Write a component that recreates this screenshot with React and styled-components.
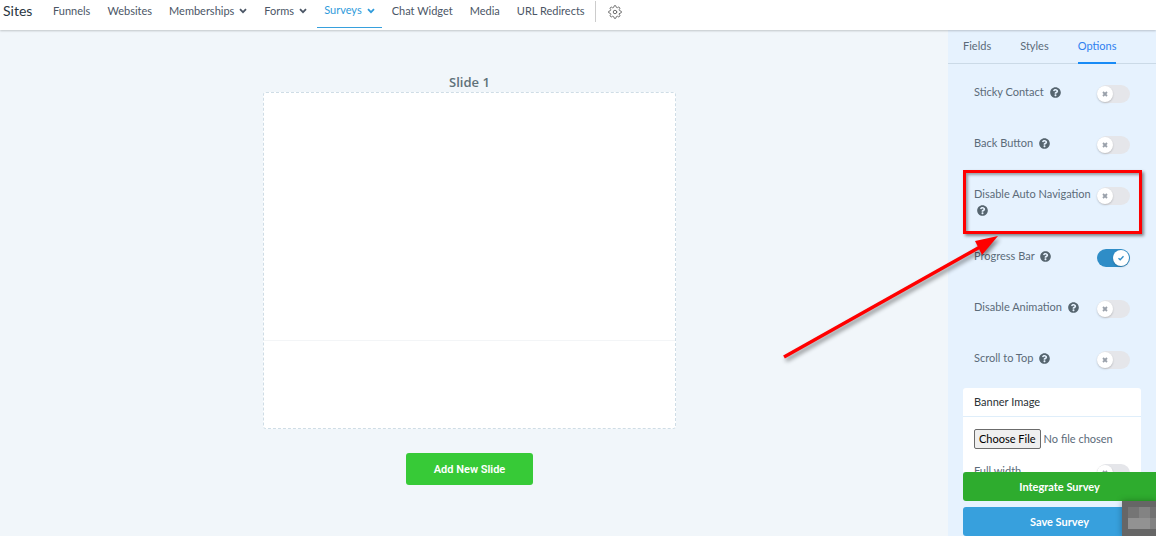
import React, { useState } from "react";
import styled, { createGlobalStyle } from "styled-components";
import { FaQuestionCircle } from "react-icons/fa";
import { FiSettings } from "react-icons/fi";

const navItems = [
  { label: "Funnels" },
  { label: "Websites" },
  { label: "Memberships", menu: true },
  { label: "Forms", menu: true },
  { label: "Surveys", menu: true, active: true },
  { label: "Chat Widget" },
  { label: "Media" },
  { label: "URL Redirects" },
];

const tabs = ["Fields", "Styles", "Options"];

const optionList = [
  { id: "sticky", label: "Sticky Contact" },
  { id: "back", label: "Back Button" },
  { id: "autoNav", label: "Disable Auto Navigation", highlight: true },
  { id: "progress", label: "Progress Bar" },
  { id: "animation", label: "Disable Animation" },
  { id: "scroll", label: "Scroll to Top" },
];

function Chevron() {
  return (
    <ChevronIcon viewBox="0 0 8 6" aria-hidden="true">
      <path d="M1 1.2l3 3 3-3" />
    </ChevronIcon>
  );
}

function Toggle({ id, checked, onChange }) {
  return (
    <Switch>
      <SwitchInput
        id={id}
        type="checkbox"
        checked={checked}
        onChange={onChange}
      />
      <Knob $on={checked}>
        <svg viewBox="0 0 8 8" aria-hidden="true">
          {checked ? (
            <path d="M1.5 4.2l1.7 1.6 3.3-3.5" />
          ) : (
            <path d="M2 2l4 4M6 2l-4 4" />
          )}
        </svg>
      </Knob>
    </Switch>
  );
}

function App() {
  const [activeTab, setActiveTab] = useState("Options");
  const [values, setValues] = useState({ progress: true });

  const flip = (id) => setValues((prev) => ({ ...prev, [id]: !prev[id] }));

  return (
    <>
      <GlobalStyle />
      <Page>
        <TopBar>
          <Brand>Sites</Brand>
          <Nav>
            {navItems.map((item) =>
              item.menu ? (
                <NavButton key={item.label} type="button" $active={item.active}>
                  {item.label}
                  <Chevron />
                </NavButton>
              ) : (
                <NavLink key={item.label} href="#">
                  {item.label}
                </NavLink>
              )
            )}
          </Nav>
          <SettingsButton type="button" aria-label="Settings">
            <GearIcon />
          </SettingsButton>
        </TopBar>

        <Body>
          <Canvas>
            <SlideTitle>Slide 1</SlideTitle>
            <Slide>
              <SlideContent />
              <SlideFooter />
            </Slide>
            <AddButton type="button">Add New Slide</AddButton>
          </Canvas>

          <Panel>
            <Tabs role="tablist">
              {tabs.map((tab) => (
                <Tab
                  key={tab}
                  type="button"
                  role="tab"
                  aria-selected={activeTab === tab}
                  $active={activeTab === tab}
                  onClick={() => setActiveTab(tab)}
                >
                  {tab}
                </Tab>
              ))}
            </Tabs>
            <Options>
              <OptionRows>
                {optionList.map((option) => (
                  <Row key={option.id}>
                    <Label htmlFor={option.id}>
                      {option.label} <HelpIcon />
                    </Label>
                    <Toggle
                      id={option.id}
                      checked={!!values[option.id]}
                      onChange={() => flip(option.id)}
                    />
                    {option.highlight && <Highlight />}
                  </Row>
                ))}
              </OptionRows>
              <Card>
                <CardTitle htmlFor="banner">Banner Image</CardTitle>
                <CardBody>
                  <FileInput id="banner" type="file" />
                  <Row>
                    <Label htmlFor="fullWidth">Full width</Label>
                    <Toggle
                      id="fullWidth"
                      checked={!!values.fullWidth}
                      onChange={() => flip("fullWidth")}
                    />
                  </Row>
                </CardBody>
              </Card>
            </Options>
            <Actions>
              <ActionButton type="button" $color="#2eac2e">
                Integrate Survey
              </ActionButton>
              <ActionButton type="button" $color="#37a0dd">
                Save Survey
              </ActionButton>
            </Actions>
          </Panel>
        </Body>

        <Arrow viewBox="0 0 230 136" aria-hidden="true">
          <path d="M4 126L200 16" stroke="#f00" strokeWidth="3.5" />
          <path d="M218 5L195 10L202 24Z" fill="#f00" />
        </Arrow>
        <Badge viewBox="0 0 34 35" aria-hidden="true">
          <path d="M0 0h34v35H0z" fill="#666" />
          <path d="M6 6h11v11H6z" fill="#757575" />
          <path d="M17 6h11v11H17z" fill="#838383" />
          <path d="M28 6h6v11h-6z" fill="#727272" />
          <path d="M6 17h22v11H6z" fill="#929292" />
          <path d="M28 17h6v11h-6z" fill="#828282" />
        </Badge>
      </Page>
    </>
  );
}

export default App;

const GlobalStyle = createGlobalStyle`
  * {
    box-sizing: border-box;
  }

  body {
    margin: 0;
    font-family: Lato, "Open Sans", sans-serif;
    font-size: 11px;
    color: #5b6b79;
  }

  button,
  input {
    font-family: inherit;
    font-size: inherit;
  }
`;

const Page = styled.div`
  position: relative;
  display: flex;
  flex-direction: column;
  height: 100vh;
  overflow: hidden;
`;

const TopBar = styled.header`
  position: relative;
  z-index: 1;
  display: flex;
  align-items: flex-start;
  height: 30px;
  background: #fff;
  box-shadow: 0 1px 2px rgba(0, 0, 0, 0.2);
`;

const Brand = styled.div`
  width: 46px;
  padding-left: 3px;
  font-size: 14px;
  line-height: 22px;
  color: #2a3642;
`;

const Nav = styled.nav`
  display: flex;
  gap: 3px;
`;

const NavLink = styled.a`
  height: 28px;
  padding: 0 7px;
  line-height: 22px;
  color: #4b5666;
  text-decoration: none;
  white-space: nowrap;
`;

const NavButton = styled.button`
  display: flex;
  align-items: flex-start;
  gap: 5px;
  height: 28px;
  padding: 0 7px;
  border: none;
  border-bottom: 1px solid ${(props) => (props.$active ? "#37a0dd" : "transparent")};
  background: none;
  line-height: ${(props) => (props.$active ? "20px" : "22px")};
  color: ${(props) => (props.$active ? "#2f9bdb" : "#4b5666")};
  cursor: pointer;
`;

const ChevronIcon = styled.svg`
  width: 8px;
  height: 6px;
  margin-top: 8px;
  fill: none;
  stroke: currentColor;
  stroke-width: 1.8;
`;

const SettingsButton = styled.button`
  height: 21px;
  margin: 1px 0 0 3px;
  padding: 0 0 0 12px;
  border: none;
  border-left: 1px solid #ccc;
  background: none;
  cursor: pointer;
`;

const GearIcon = styled(FiSettings)`
  display: block;
  width: 14px;
  height: 14px;
  color: #6b6b6b;
  stroke-width: 1.7;
`;

const Body = styled.div`
  display: flex;
  flex: 1;
  min-height: 0;
`;

const Canvas = styled.main`
  display: flex;
  flex-direction: column;
  align-items: center;
  flex: 1;
  padding: 42px 9px 0 0;
  background: #f1f6fa;
`;

const SlideTitle = styled.h2`
  margin: 0;
  font-family: "Open Sans", sans-serif;
  font-size: 13px;
  font-weight: 600;
  line-height: 20px;
  color: #607179;
`;

const Slide = styled.section`
  width: 44%;
  border: 1px dashed #cfdde6;
  border-radius: 3px;
  background: #fff;
`;

const SlideContent = styled.div`
  height: 248px;
  border-bottom: 1px solid #f3f5f7;
`;

const SlideFooter = styled.div`
  height: 87px;
`;

const AddButton = styled.button`
  height: 32px;
  margin-top: 24px;
  padding: 0 28px;
  border: none;
  border-radius: 3px;
  background: #37ca37;
  font-family: Roboto, sans-serif;
  font-weight: 600;
  color: #fff;
  cursor: pointer;
`;

const Panel = styled.aside`
  display: flex;
  flex-direction: column;
  width: 208px;
  background: #e6f2fe;
`;

const Tabs = styled.div`
  display: flex;
  gap: 29px;
  height: 34px;
  padding: 0 15px;
  border-bottom: 1px solid #cbdae7;
`;

const Tab = styled.button`
  height: 34px;
  padding: 0 0 2px;
  border: none;
  border-bottom: 2px solid ${(props) => (props.$active ? "#188bf6" : "transparent")};
  background: none;
  color: ${(props) => (props.$active ? "#2f80f0" : "#5b6b79")};
  cursor: pointer;
`;

const Options = styled.div`
  flex: 1;
  min-height: 0;
  padding: 20px 15px 0;
  overflow: hidden;
`;

const OptionRows = styled.div`
  display: flex;
  flex-direction: column;
  gap: 30px;
`;

const Row = styled.div`
  position: relative;
  display: flex;
  align-items: flex-start;
  justify-content: space-between;
  min-height: 21px;
  padding: 0 11px;
`;

const Label = styled.label`
  line-height: 16px;
`;

const HelpIcon = styled(FaQuestionCircle)`
  width: 11px;
  height: 11px;
  margin-left: 3px;
  vertical-align: -2px;
  color: #56656f;
`;

const Switch = styled.span`
  position: relative;
  flex: none;
  height: 18px;
  margin-top: 1px;
`;

const SwitchInput = styled.input`
  appearance: none;
  display: block;
  width: 33px;
  height: 18px;
  margin: 0;
  border-radius: 9px;
  background: #e5e6ea;
  cursor: pointer;

  &:checked {
    background: #2f8dc7;
  }
`;

const Knob = styled.span`
  position: absolute;
  top: 1px;
  left: ${(props) => (props.$on ? "16px" : "0")};
  width: 16px;
  height: 16px;
  padding: 4px;
  border-radius: 50%;
  background: #fff;
  box-shadow: 0 1px 2px rgba(0, 0, 0, 0.2);
  pointer-events: none;

  svg {
    display: block;
    width: 8px;
    height: 8px;
    fill: none;
    stroke: ${(props) => (props.$on ? "#2f8dc7" : "#9aa1ab")};
    stroke-width: ${(props) => (props.$on ? 1.3 : 1.8)};
  }
`;

const Highlight = styled.div`
  position: absolute;
  inset: -16px -1px -16px 0;
  border: 3px solid #f00;
  box-shadow: 2px 2px 3px rgba(0, 0, 0, 0.45),
    inset 2px 2px 3px rgba(0, 0, 0, 0.35);
  pointer-events: none;
`;

const Card = styled.section`
  margin-top: 17px;
  border-radius: 3px;
  background: #fff;
`;

const CardTitle = styled.label`
  display: block;
  padding: 0 11px;
  border-bottom: 1px solid #dfeefa;
  line-height: 28px;
  color: #2a3135;
`;

const CardBody = styled.div`
  padding-top: 12px;
`;

const FileInput = styled.input`
  display: block;
  width: 100%;
  height: 20px;
  margin-bottom: 14px;
  padding: 0 11px;
  line-height: 18px;

  &::file-selector-button {
    height: 20px;
    margin-right: 3px;
    padding: 0 4px;
    border: 1px solid #6b6b6b;
    border-radius: 2px;
    background: #efefef;
    font: inherit;
    color: #000;
  }
`;

const Actions = styled.div`
  display: flex;
  flex-direction: column;
  gap: 6px;
  padding-left: 15px;
`;

const ActionButton = styled.button`
  height: 29px;
  border: none;
  border-radius: 3px 0 0 3px;
  background: ${(props) => props.$color};
  font-weight: 700;
  color: #fff;
  cursor: pointer;
`;

const Arrow = styled.svg`
  position: absolute;
  top: 231px;
  right: 146px;
  width: 230px;
  height: 136px;
  filter: drop-shadow(2px 3px 2px rgba(0, 0, 0, 0.45));
  pointer-events: none;
`;

const Badge = styled.svg`
  position: absolute;
  right: 0;
  bottom: 0;
  width: 34px;
  height: 35px;
  filter: drop-shadow(0 0 3px rgba(0, 0, 0, 0.3));
`;
